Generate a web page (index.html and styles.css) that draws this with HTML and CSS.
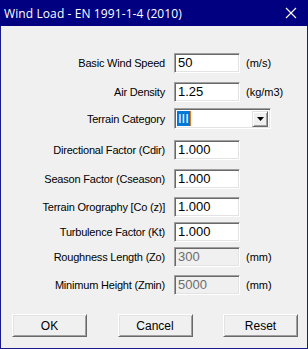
FILE: index.html
```html
<!DOCTYPE html>
<html>
<head>
<meta charset="utf-8">
<link rel="stylesheet" href="styles.css">
</head>
<body>
<div class="window">
  <div class="titlebar">
    <span class="title">Wind Load - EN 1991-1-4 (2010)</span>
    <svg class="close" width="12" height="12" viewBox="0 0 12 12"><path d="M1 1 L11 11 M11 1 L1 11" stroke="#fff" stroke-width="1.1" fill="none"/></svg>
  </div>
  <div class="content">
    <div class="row r1"><span class="label">Basic Wind Speed</span><div class="field">50</div><span class="unit">(m/s)</span></div>
    <div class="row r2"><span class="label">Air Density</span><div class="field">1.25</div><span class="unit">(kg/m3)</span></div>
    <div class="row r3"><span class="label">Terrain Category</span>
      <div class="combo"><span class="sel">III</span><span class="caret"></span><span class="drop"><svg width="7" height="4" viewBox="0 0 7 4"><path d="M0 0 H7 L3.5 4 Z" fill="#000"/></svg></span></div>
    </div>
    <div class="row r4"><span class="label">Directional Factor (Cdir)</span><div class="field">1.000</div></div>
    <div class="row r5"><span class="label">Season Factor (Cseason)</span><div class="field">1.000</div></div>
    <div class="row r6"><span class="label">Terrain Orography [Co (z)]</span><div class="field">1.000</div></div>
    <div class="row r7"><span class="label">Turbulence Factor (Kt)</span><div class="field">1.000</div></div>
    <div class="row r8 disabled"><span class="label">Roughness Length (Zo)</span><div class="field">300</div><span class="unit">(mm)</span></div>
    <div class="row r9 disabled"><span class="label">Minimum Height (Zmin)</span><div class="field">5000</div><span class="unit">(mm)</span></div>
    <div class="buttons">
      <button class="btn">OK</button>
      <button class="btn">Cancel</button>
      <button class="btn">Reset</button>
    </div>
  </div>
</div>
</body>
</html>
```
FILE: styles.css
```css
html, body {
  margin: 0;
  padding: 0;
  background: #f0f0f0;
}
.window {
  width: 308px;
  height: 349px;
  box-sizing: border-box;
  border: 1px solid #1a1a8c;
  border-top: none;
  background: #f0f0f0;
  display: flex;
  flex-direction: column;
  font-family: "Liberation Sans", Arial, sans-serif;
  font-size: 11px;
  color: #000;
}
.titlebar {
  height: 26px;
  margin: 0 -1px;
  background: #000080;
  display: flex;
  align-items: center;
  justify-content: space-between;
  padding: 0 11px 0 4px;
}
.title {
  color: #fff;
  font-family: "Open Sans", "Noto Sans", sans-serif;
  font-size: 12px;
  letter-spacing: 0.1px;
}
.content {
  flex: 1;
  padding-top: 27px;
  display: flex;
  flex-direction: column;
}
.row {
  display: grid;
  grid-template-columns: 164px 66px auto;
  column-gap: 9px;
  align-items: center;
  height: 20px;
}
.row .label {
  text-align: right;
  white-space: nowrap;
  letter-spacing: -0.2px;
}
.row .field {
  grid-column: 2;
  height: 20px;
  box-sizing: border-box;
  background: #fff;
  border-style: solid;
  border-width: 1px;
  border-color: #a0a0a0 #fff #fff #a0a0a0;
  box-shadow: inset 1px 1px 0 #696969, inset -1px -1px 0 #e3e3e3;
  padding: 2px 0 0 3px;
  line-height: 14px;
  font-size: 13px;
}
.row .unit {
  margin-left: -3px;
}
.r2 { margin-top: 9px; }
.r3 { margin-top: 6px; height: 21px; grid-template-columns: 164px 97px; }
.r4 { margin-top: 11px; }
.r5 { margin-top: 9px; }
.r6 { margin-top: 8px; }
.r7 { margin-top: 5px; }
.r8 { margin-top: 5px; }
.r9 { margin-top: 8px; }
.disabled .field {
  background: #f0f0f0;
  color: #6d6d6d;
}
.combo {
  grid-column: 2;
  height: 21px;
  box-sizing: border-box;
  background: #fff;
  border-style: solid;
  border-width: 1px;
  border-color: #a0a0a0 #fff #fff #a0a0a0;
  box-shadow: inset 1px 1px 0 #696969, inset -1px -1px 0 #e3e3e3;
  padding: 2px;
  display: flex;
  align-items: center;
  font-size: 13px;
}
.sel {
  background: #0078d7;
  color: #fff;
  height: 15px;
  line-height: 15px;
  padding: 0 1px;
}
.caret {
  width: 1px;
  height: 15px;
  background: #e87a14;
}
.drop {
  margin-left: auto;
  width: 16px;
  height: 16px;
  box-sizing: border-box;
  background: #f0f0f0;
  border-style: solid;
  border-width: 1px;
  border-color: #e3e3e3 #696969 #696969 #e3e3e3;
  box-shadow: inset 1px 1px 0 #fff, inset -1px -1px 0 #a0a0a0;
  display: flex;
  align-items: center;
  justify-content: center;
}
.buttons {
  margin-top: auto;
  margin-bottom: 11px;
  display: flex;
  justify-content: space-between;
  padding: 0 9px 0 11px;
}
.btn {
  width: 75px;
  height: 23px;
  box-sizing: border-box;
  font-family: "Liberation Sans", Arial, sans-serif;
  font-size: 12px;
  color: #000;
  background: #f0f0f0;
  border-style: solid;
  border-width: 1px;
  border-color: #fff #696969 #696969 #fff;
  box-shadow: inset 1px 1px 0 #e3e3e3, inset -1px -1px 0 #a0a0a0;
  padding: 0;
}
```
